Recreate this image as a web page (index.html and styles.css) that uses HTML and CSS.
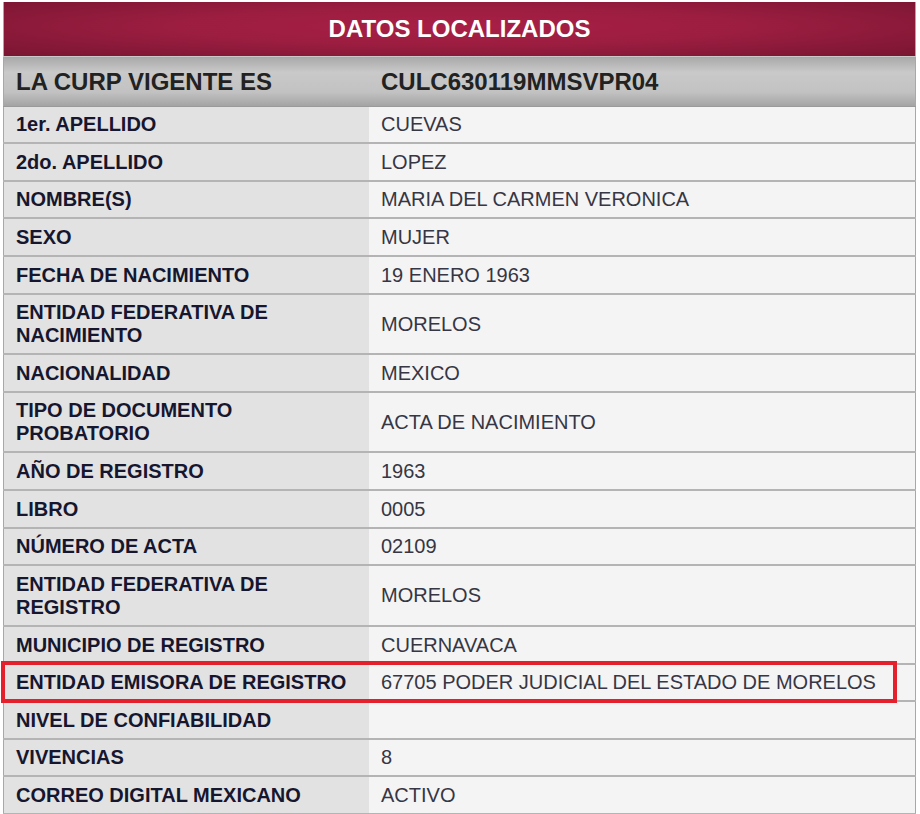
FILE: index.html
```html
<!DOCTYPE html>
<html lang="es">
<head>
    <meta charset="UTF-8">
    <meta name="viewport" content="width=device-width, initial-scale=1.0">
    <title>Datos localizados</title>
    <link rel="stylesheet" href="styles.css">
</head>
<body>
    <div class="container">
        <table class="datos">
            <tr>
                <th class="titulo" colspan="2">DATOS LOCALIZADOS</th>
            </tr>
            <tr class="curp">
                <td class="label">LA CURP VIGENTE ES</td>
                <td class="value">CULC630119MMSVPR04</td>
            </tr>
            <tr><td class="label">1er. APELLIDO</td><td class="value">CUEVAS</td></tr>
            <tr><td class="label">2do. APELLIDO</td><td class="value">LOPEZ</td></tr>
            <tr><td class="label">NOMBRE(S)</td><td class="value">MARIA DEL CARMEN VERONICA</td></tr>
            <tr><td class="label">SEXO</td><td class="value">MUJER</td></tr>
            <tr><td class="label">FECHA DE NACIMIENTO</td><td class="value">19 ENERO 1963</td></tr>
            <tr><td class="label">ENTIDAD FEDERATIVA DE<br>NACIMIENTO</td><td class="value">MORELOS</td></tr>
            <tr><td class="label">NACIONALIDAD</td><td class="value">MEXICO</td></tr>
            <tr><td class="label">TIPO DE DOCUMENTO<br>PROBATORIO</td><td class="value">ACTA DE NACIMIENTO</td></tr>
            <tr><td class="label">AÑO DE REGISTRO</td><td class="value">1963</td></tr>
            <tr><td class="label">LIBRO</td><td class="value">0005</td></tr>
            <tr><td class="label">NÚMERO DE ACTA</td><td class="value">02109</td></tr>
            <tr><td class="label">ENTIDAD FEDERATIVA DE<br>REGISTRO</td><td class="value">MORELOS</td></tr>
            <tr><td class="label">MUNICIPIO DE REGISTRO</td><td class="value">CUERNAVACA</td></tr>
            <tr>
                <td class="label marcado">
                    <span class="resaltado"></span>
                    ENTIDAD EMISORA DE REGISTRO
                </td>
                <td class="value">67705 PODER JUDICIAL DEL ESTADO DE MORELOS</td>
            </tr>
            <tr><td class="label">NIVEL DE CONFIABILIDAD</td><td class="value"></td></tr>
            <tr><td class="label">VIVENCIAS</td><td class="value">8</td></tr>
            <tr><td class="label">CORREO DIGITAL MEXICANO</td><td class="value">ACTIVO</td></tr>
        </table>
    </div>
</body>
</html>
```

FILE: styles.css
```css
body {
    margin: 0;
    background: #ffffff;
    font-family: "Liberation Sans", Arial, sans-serif;
}
.container {
    padding: 2px 0 0 3px;
}
.datos {
    width: 913px;
    border-collapse: collapse;
    border-left: 1px solid #a8a8a8;
    border-right: 1px solid #a8a8a8;
    border-bottom: 1px solid #a8a8a8;
}
.titulo {
    height: 54px;
    padding: 0;
    background: radial-gradient(ellipse at 50% 45%, #a81f46 0%, #9b1d40 45%, #781531 100%);
    color: #ffffff;
    font-size: 24px;
    font-weight: bold;
    text-align: center;
    border-bottom: 1px solid #c9c9c9;
}
.datos td {
    padding: 6.6px 12px 6.03px;
    line-height: 23px;
    border-bottom: 2px solid #b4b4b4;
    vertical-align: middle;
}
.datos .label {
    width: 341px;
    background: #e2e2e2;
    color: #16162e;
    font-size: 20px;
    font-weight: bold;
}
.datos .value {
    background: #f4f4f4;
    color: #363644;
    font-size: 20px;
}
.curp td {
    height: 36px;
    border-bottom: 1px solid #9a9a9a;
}
.datos .curp .label,
.datos .curp .value {
    background: linear-gradient(to bottom, #a9a9a9 0%, #c9c9c9 30%, #c2c2c2 70%, #a3a3a3 100%);
    color: #222222;
    font-size: 24px;
    font-weight: bold;
}
.marcado {
    position: relative;
}
.resaltado {
    position: absolute;
    left: -3px;
    top: -4px;
    width: 896px;
    height: 42px;
    box-sizing: border-box;
    border: 4px solid #e3202b;
}
```
